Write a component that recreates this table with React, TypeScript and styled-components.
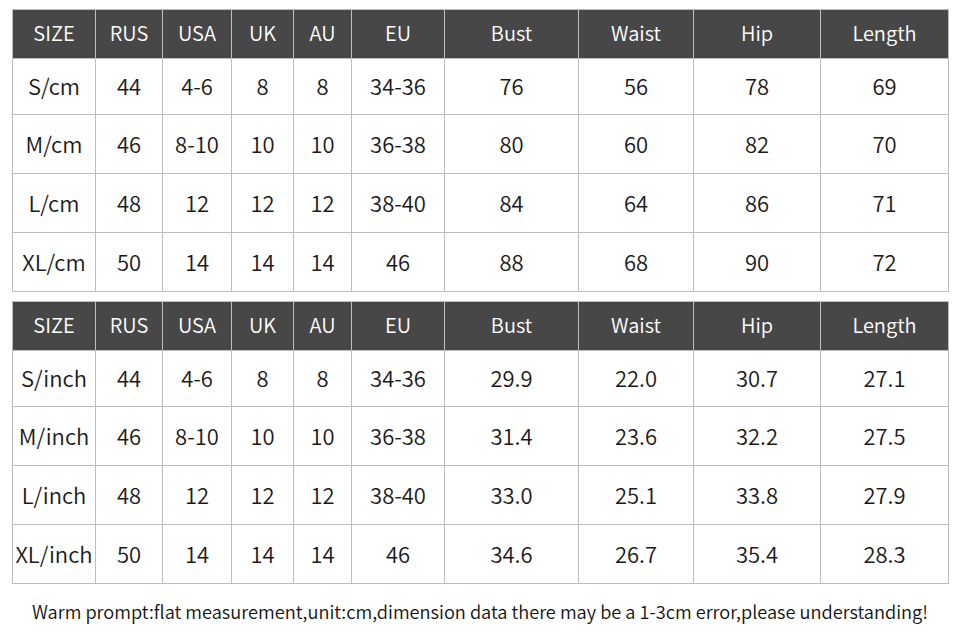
import styled, { createGlobalStyle } from "styled-components";

const GlobalStyle = createGlobalStyle`
  html, body {
    margin: 0;
    padding: 0;
    background: #fff;
  }
  body {
    font-family: "Noto Sans CJK SC", "Noto Sans", sans-serif;
    font-weight: 350;
    color: #1a1a1a;
  }
`;

const Page = styled.div`
  width: 960px;
  height: 634px;
  padding: 9px 12px 0;
  box-sizing: border-box;
  display: flex;
  flex-direction: column;
  gap: 9px;
`;

const Table = styled.table`
  width: 936px;
  table-layout: fixed;
  border-collapse: collapse;
`;

const HeadCell = styled.th`
  height: 45px;
  padding: 0 0 3px;
  background: #474747;
  color: #fff;
  font-weight: 350;
  font-size: 20px;
  line-height: 24px;
  border: 1px solid #bdbdbd;
  text-align: center;
  vertical-align: middle;
`;

const Cell = styled.td<{ $h: number }>`
  height: ${(p) => p.$h}px;
  padding: 0 0 3px;
  font-size: 22px;
  line-height: 26px;
  color: #1a1a1a;
  border: 1px solid #bdbdbd;
  text-align: center;
  vertical-align: middle;
  white-space: nowrap;
`;

const Note = styled.p`
  margin: 6px 0 0;
  text-align: center;
  font-size: 18.2px;
  line-height: 24px;
  color: #111;
  white-space: nowrap;
`;

const widths = [83, 67, 69, 62, 58, 93, 134, 115, 127, 128];
const heads = ["SIZE", "RUS", "USA", "UK", "AU", "EU", "Bust", "Waist", "Hip", "Length"];
const rowHeights = [52, 55, 55, 55];

const cmRows = [
  ["S/cm", "44", "4-6", "8", "8", "34-36", "76", "56", "78", "69"],
  ["M/cm", "46", "8-10", "10", "10", "36-38", "80", "60", "82", "70"],
  ["L/cm", "48", "12", "12", "12", "38-40", "84", "64", "86", "71"],
  ["XL/cm", "50", "14", "14", "14", "46", "88", "68", "90", "72"],
];

const inchRows = [
  ["S/inch", "44", "4-6", "8", "8", "34-36", "29.9", "22.0", "30.7", "27.1"],
  ["M/inch", "46", "8-10", "10", "10", "36-38", "31.4", "23.6", "32.2", "27.5"],
  ["L/inch", "48", "12", "12", "12", "38-40", "33.0", "25.1", "33.8", "27.9"],
  ["XL/inch", "50", "14", "14", "14", "46", "34.6", "26.7", "35.4", "28.3"],
];

function SizeTable({ rows }: { rows: string[][] }) {
  return (
    <Table>
      <colgroup>
        {widths.map((w, i) => (
          <col key={i} style={{ width: w }} />
        ))}
      </colgroup>
      <thead>
        <tr>
          {heads.map((h) => (
            <HeadCell key={h}>{h}</HeadCell>
          ))}
        </tr>
      </thead>
      <tbody>
        {rows.map((r, i) => (
          <tr key={r[0]}>
            {r.map((v, j) => (
              <Cell key={j} $h={rowHeights[i]}>
                {v}
              </Cell>
            ))}
          </tr>
        ))}
      </tbody>
    </Table>
  );
}

export default function App() {
  return (
    <>
      <GlobalStyle />
      <Page>
        <SizeTable rows={cmRows} />
        <SizeTable rows={inchRows} />
        <Note>
          Warm prompt:flat measurement,unit:cm,dimension data there may be a 1-3cm error,please understanding!
        </Note>
      </Page>
    </>
  );
}
